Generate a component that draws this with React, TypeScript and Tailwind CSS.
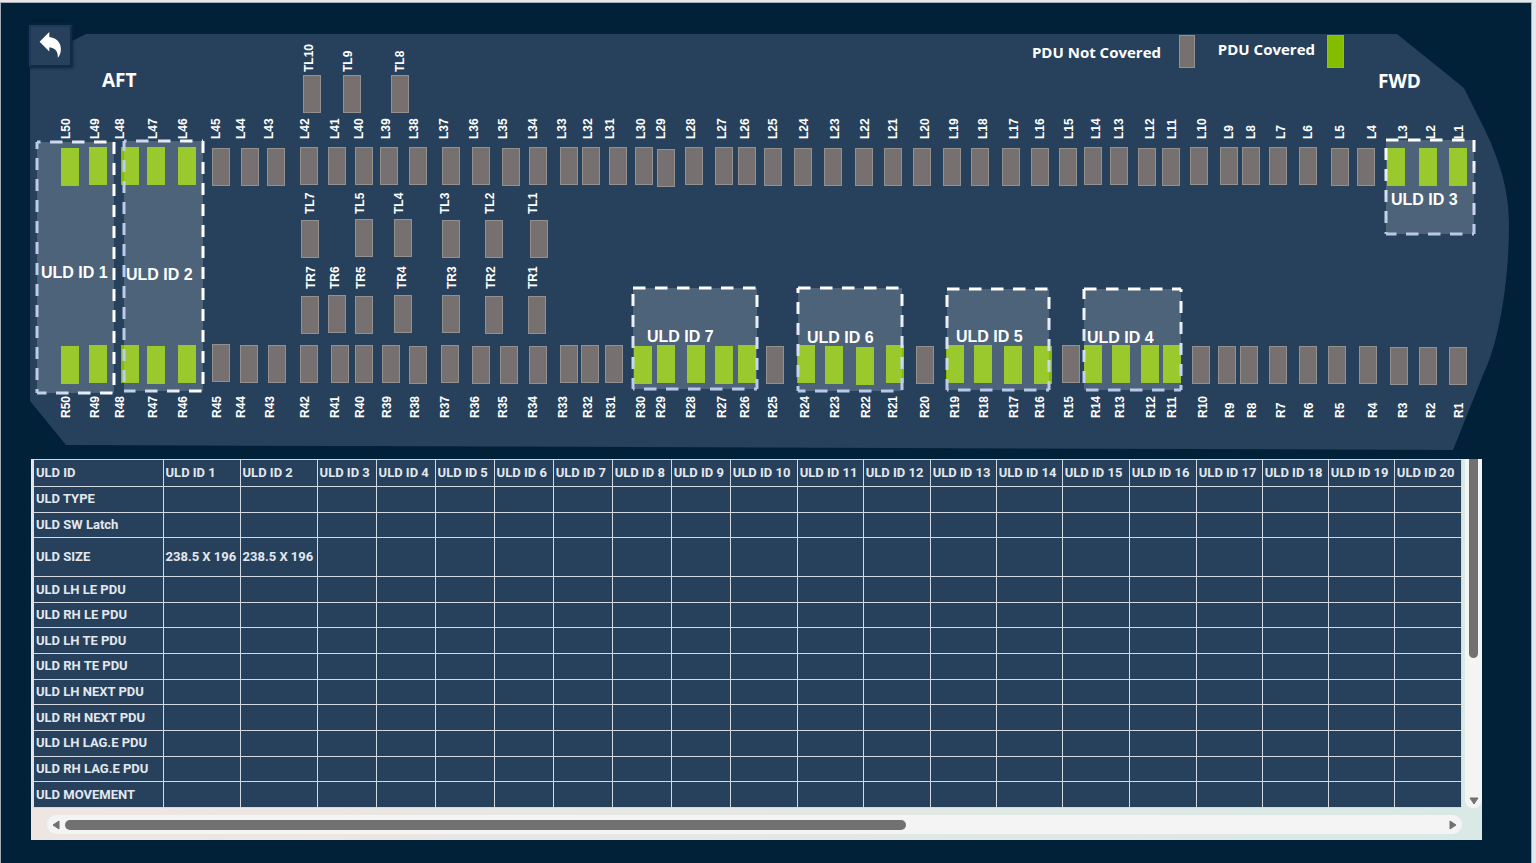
import React from "react";

type Pdu = [name: string, x: number, y: number, labelX: number, covered?: boolean];
type Row = { labelBottom: number; pdus: Pdu[] };

const PLAN_WIDTH = 1480;
const PLAN_LEFT = 30;
const PLAN_TOP = 34;

const pct = (x: number) => `${((x - PLAN_LEFT) / PLAN_WIDTH) * 100}%`;
const top = (y: number) => y - PLAN_TOP;

const rows: Row[] = [
  {
    labelBottom: 72,
    pdus: [
      ["TL10", 303, 75, 309],
      ["TL9", 343, 75, 348],
      ["TL8", 391, 75, 400],
    ],
  },
  {
    labelBottom: 139,
    pdus: [
      ["L50", 61, 148, 66, true], ["L49", 89, 147, 95, true], ["L48", 121, 147, 120, true],
      ["L47", 147, 147, 153, true], ["L46", 178, 147, 183, true], ["L45", 212, 148, 216],
      ["L44", 241, 148, 241], ["L43", 267, 148, 269], ["L42", 300, 147, 305],
      ["L41", 328, 147, 335], ["L40", 355, 147, 359], ["L39", 380, 147, 386],
      ["L38", 409, 147, 414], ["L37", 442, 147, 444], ["L36", 472, 147, 474],
      ["L35", 502, 148, 503], ["L34", 529, 147, 533], ["L33", 560, 147, 562],
      ["L32", 582, 147, 588], ["L31", 609, 147, 610], ["L30", 635, 147, 641],
      ["L29", 657, 149, 661], ["L28", 685, 147, 691], ["L27", 715, 147, 722],
      ["L26", 738, 147, 745], ["L25", 764, 148, 773], ["L24", 794, 148, 804],
      ["L23", 824, 148, 835], ["L22", 855, 148, 865], ["L21", 884, 148, 893],
      ["L20", 913, 148, 925], ["L19", 943, 148, 954], ["L18", 971, 148, 983],
      ["L17", 1002, 148, 1014], ["L16", 1031, 148, 1040], ["L15", 1059, 148, 1069],
      ["L14", 1084, 147, 1096], ["L13", 1110, 147, 1119], ["L12", 1138, 148, 1150],
      ["L11", 1162, 148, 1172], ["L10", 1190, 147, 1202], ["L9", 1220, 147, 1229],
      ["L8", 1242, 147, 1251], ["L7", 1269, 147, 1281], ["L6", 1299, 147, 1308],
      ["L5", 1331, 148, 1340], ["L4", 1357, 148, 1372], ["L3", 1387, 148, 1403, true],
      ["L2", 1419, 148, 1431, true], ["L1", 1449, 148, 1459, true],
    ],
  },
  {
    labelBottom: 214,
    pdus: [
      ["TL7", 301, 220, 310], ["TL5", 355, 219, 360], ["TL4", 394, 219, 399],
      ["TL3", 442, 220, 445], ["TL2", 485, 220, 490], ["TL1", 530, 220, 533],
    ],
  },
  {
    labelBottom: 289,
    pdus: [
      ["TR7", 301, 296, 311], ["TR6", 328, 295, 335], ["TR5", 355, 296, 361],
      ["TR4", 394, 295, 402], ["TR3", 442, 295, 452], ["TR2", 485, 296, 491],
      ["TR1", 528, 296, 533],
    ],
  },
  {
    labelBottom: 418,
    pdus: [
      ["R50", 61, 346, 66, true], ["R49", 89, 345, 95, true], ["R48", 121, 345, 120, true],
      ["R47", 147, 346, 153, true], ["R46", 178, 345, 183, true], ["R45", 212, 344, 217],
      ["R44", 240, 345, 241], ["R43", 268, 345, 270], ["R42", 300, 345, 305],
      ["R41", 331, 345, 335], ["R40", 355, 345, 360], ["R39", 382, 345, 387],
      ["R38", 409, 346, 415], ["R37", 441, 345, 445], ["R36", 472, 346, 475],
      ["R35", 500, 346, 503], ["R34", 529, 346, 533], ["R33", 560, 345, 563],
      ["R32", 581, 345, 588], ["R31", 605, 345, 611], ["R30", 634, 346, 641, true],
      ["R29", 657, 345, 661, true], ["R28", 687, 345, 691, true], ["R27", 715, 346, 722, true],
      ["R26", 738, 345, 745, true], ["R25", 766, 346, 773], ["R24", 797, 345, 805, true],
      ["R23", 825, 346, 835, true], ["R22", 856, 347, 866, true], ["R21", 886, 345, 893, true],
      ["R20", 916, 346, 925], ["R19", 946, 345, 955, true], ["R18", 974, 345, 984, true],
      ["R17", 1004, 346, 1014, true], ["R16", 1034, 346, 1040, true], ["R15", 1062, 345, 1069],
      ["R14", 1084, 345, 1096, true], ["R13", 1112, 345, 1120, true], ["R12", 1141, 345, 1151, true],
      ["R11", 1163, 345, 1172, true], ["R10", 1192, 346, 1203], ["R9", 1218, 346, 1230],
      ["R8", 1240, 346, 1252], ["R7", 1269, 346, 1281], ["R6", 1299, 346, 1309],
      ["R5", 1328, 346, 1340], ["R4", 1359, 346, 1373], ["R3", 1390, 347, 1403],
      ["R2", 1419, 347, 1431], ["R1", 1449, 347, 1459],
    ],
  },
];

type Uld = {
  name: string;
  x1: number;
  y1: number;
  x2: number;
  y2: number;
  labelX: number;
  labelY: number;
  fade: "left" | "bottom";
  /** Where a dash begins on the top, right, bottom and left edge. */
  dash: [number, number, number, number];
};

const ulds: Uld[] = [
  { name: "ULD ID 1", x1: 37, y1: 142, x2: 114, y2: 393, labelX: 41, labelY: 273, fade: "left", dash: [50, 142, 34, 137] },
  { name: "ULD ID 2", x1: 124, y1: 141, x2: 203, y2: 391, labelX: 126, labelY: 275, fade: "left", dash: [136, 141, 123, 139] },
  { name: "ULD ID 3", x1: 1386, y1: 140, x2: 1474, y2: 234, labelX: 1391, labelY: 200, fade: "bottom", dash: [1386, 140, 1384, 148] },
  { name: "ULD ID 4", x1: 1084, y1: 289, x2: 1181, y2: 390, labelX: 1087, labelY: 338, fade: "bottom", dash: [1084, 280, 1086, 287] },
  { name: "ULD ID 5", x1: 947, y1: 289, x2: 1049, y2: 390, labelX: 956, labelY: 337, fade: "bottom", dash: [947, 297, 958, 295] },
  { name: "ULD ID 6", x1: 798, y1: 288, x2: 902, y2: 391, labelX: 807, labelY: 338, fade: "bottom", dash: [798, 294, 793, 281] },
  { name: "ULD ID 7", x1: 633, y1: 288, x2: 757, y2: 389, labelX: 647, labelY: 337, fade: "bottom", dash: [633, 295, 644, 294] },
];

const columns = [130, 77, 77, 59, 59, 59, 59, 59, 59, 59, 67, 66, 67, 66, 66, 67, 67, 66, 66, 66, 67];
const columnTotal = columns.reduce((sum, w) => sum + w, 0);
const uldNumbers = Array.from({ length: 20 }, (_, i) => i + 1);

const tableRows: { name: string; values?: string[] }[] = [
  { name: "ULD TYPE" },
  { name: "ULD SW Latch" },
  { name: "ULD SIZE", values: ["238.5 X 196", "238.5 X 196"] },
  { name: "ULD LH LE PDU" },
  { name: "ULD RH LE PDU" },
  { name: "ULD LH TE PDU" },
  { name: "ULD RH TE PDU" },
  { name: "ULD LH NEXT PDU" },
  { name: "ULD RH NEXT PDU" },
  { name: "ULD LH LAG.E PDU" },
  { name: "ULD RH LAG.E PDU" },
  { name: "ULD MOVEMENT" },
];

function Hull() {
  return (
    <svg className="absolute inset-0 h-full w-full" viewBox="30 34 1480 416" preserveAspectRatio="none" aria-hidden="true">
      <path
        d="M30 62L86 34H1397L1464 88L1485 130C1500 162 1509 190 1509 225C1509 285 1498 345 1483 375L1453 450L66 445L30 401Z"
        fill="#27415c"
      />
    </svg>
  );
}

function PduMark({ pdu, labelBottom }: { pdu: Pdu; labelBottom: number }) {
  const [name, x, y, labelX, covered] = pdu;
  return (
    <>
      <span
        className={
          covered
            ? "absolute h-[38px] w-[18px] bg-[#84bd00]"
            : "absolute h-[38px] w-[18px] border border-[#94908d] bg-[#767170]"
        }
        style={{ left: pct(x), top: top(y) }}
      />
      <span
        className="absolute h-8 w-4 -translate-x-1/2 rotate-180 whitespace-nowrap text-xs leading-4 font-bold [writing-mode:vertical-rl]"
        style={{ left: pct(labelX), top: top(labelBottom) - 32 }}
      >
        {name}
      </span>
    </>
  );
}

function UldBox({ uld }: { uld: Uld }) {
  const id = uld.name.replace(/ /g, "-");
  const stroke = `url(#${id})`;
  const [t, r, b, l] = uld.dash;
  const horizontal = uld.fade === "left";
  return (
    <>
      <div
        className="absolute bg-white/18"
        style={{
          left: pct(uld.x1),
          top: top(uld.y1),
          width: `${((uld.x2 - uld.x1) / PLAN_WIDTH) * 100}%`,
          height: uld.y2 - uld.y1,
        }}
      >
        <svg className="absolute inset-0 h-full w-full overflow-visible" aria-hidden="true">
          <defs>
            <linearGradient
              id={id}
              gradientUnits="userSpaceOnUse"
              x1="0"
              y1="0"
              x2={horizontal ? "100%" : "0"}
              y2={horizontal ? "0" : "100%"}
            >
              <stop offset="0" stopColor={horizontal ? "#bccbeb" : "#ffffff"} />
              <stop offset="1" stopColor={horizontal ? "#ffffff" : "#b8c8ea"} />
            </linearGradient>
          </defs>
          <g stroke={stroke} strokeWidth="3" fill="none">
            <line x1="0" y1="0" x2="100%" y2="0" strokeDasharray="12.5 9.5" strokeDashoffset={uld.x1 - t} />
            <line x1="100%" y1="0" x2="100%" y2="100%" strokeDasharray="12 9" strokeDashoffset={uld.y1 - r} />
            <line x1="0" y1="100%" x2="100%" y2="100%" strokeDasharray="12.5 9.5" strokeDashoffset={uld.x1 - b} />
            <line x1="0" y1="0" x2="0" y2="100%" strokeDasharray="12 9" strokeDashoffset={uld.y1 - l} />
          </g>
        </svg>
      </div>
      <span
        className="absolute text-base leading-5 font-bold whitespace-nowrap"
        style={{ left: pct(uld.labelX), top: top(uld.labelY) - 10 }}
      >
        {uld.name}
      </span>
    </>
  );
}

function BackButton() {
  return (
    <button
      type="button"
      aria-label="Back"
      className="absolute -top-[9px] -left-px flex h-[42px] w-[43px] items-center justify-center border-2 border-t-[#1b3a58] border-r-[#122a48] border-b-[#122a48] border-l-[#1b3a58] bg-[#27415c] shadow-[0_0_3px_1px_#0e2340]"
    >
      <svg className="h-7 w-6" viewBox="39 32 24 28" aria-hidden="true">
        <path
          d="M39.6 41.7L49.3 32V37C56 37.6 61 42 60.9 49.5C60.8 53 59.6 56 57.8 57.8C58.2 52.5 56 48.2 49.3 47.3V51.6Z"
          fill="#ffffff"
        />
      </svg>
    </button>
  );
}

function CargoPlan() {
  return (
    <section aria-label="Cargo deck" className="relative h-[416px]">
      <Hull />
      <BackButton />
      <h2 className="absolute font-['Open_Sans','Noto_Sans',sans-serif] text-[19px] leading-6 font-bold" style={{ left: pct(102), top: top(68) }}>
        AFT
      </h2>
      <h2 className="absolute font-['Open_Sans','Noto_Sans',sans-serif] text-[19px] leading-6 font-bold" style={{ left: pct(1378), top: top(69) }}>
        FWD
      </h2>
      <div
        className="absolute flex items-center gap-[18px] font-['Open_Sans','Noto_Sans',sans-serif] text-[15px] leading-7 font-bold whitespace-nowrap"
        style={{ right: `${((1510 - 1195) / PLAN_WIDTH) * 100}%`, top: top(35) }}
      >
        PDU Not Covered
        <span className="h-[33px] w-4 border border-[#94908d] bg-[#767170]" />
      </div>
      <div
        className="absolute flex items-start gap-3 font-['Open_Sans','Noto_Sans',sans-serif] text-[15px] leading-7 font-bold whitespace-nowrap"
        style={{ right: `${((1510 - 1344) / PLAN_WIDTH) * 100}%`, top: top(35) }}
      >
        PDU Covered
        <span className="h-[33px] w-[17px] border border-[#9aa58a] bg-[#84bd00]" />
      </div>
      {rows.map((row) =>
        row.pdus.map((pdu) => <PduMark key={pdu[0]} pdu={pdu} labelBottom={row.labelBottom} />),
      )}
      {ulds.map((uld) => (
        <UldBox key={uld.name} uld={uld} />
      ))}
    </section>
  );
}

function UldTable() {
  return (
    <table className="h-[349px] w-full table-fixed border-collapse border-l-2 border-[#dfe3e8] bg-[#27415c] text-left font-[Roboto,sans-serif] text-[13px] leading-4 text-[#e3e8ee]">
      <colgroup>
        {columns.map((w, i) => (
          <col key={i} style={{ width: `${(w / columnTotal) * 100}%` }} />
        ))}
      </colgroup>
      <thead>
        <tr className="h-[27px]">
          <th scope="col" className="border border-[#d3d9e0] px-0.5 py-0 font-bold whitespace-nowrap">
            ULD ID
          </th>
          {uldNumbers.map((n) => (
            <th key={n} scope="col" className="border border-[#d3d9e0] px-0.5 py-0 font-bold whitespace-nowrap">
              ULD ID {n}
            </th>
          ))}
        </tr>
      </thead>
      <tbody>
        {tableRows.map((row) => (
          <tr key={row.name} className={row.values ? "h-[38px]" : "h-[25px]"}>
            <th scope="row" className="border border-[#d3d9e0] px-0.5 py-0 font-bold whitespace-nowrap">
              {row.name}
            </th>
            {uldNumbers.map((n) => (
              <td key={n} className="border border-[#d3d9e0] px-0.5 py-0 font-bold whitespace-nowrap">
                {row.values?.[n - 1]}
              </td>
            ))}
          </tr>
        ))}
      </tbody>
    </table>
  );
}

function Arrow({ d }: { d: string }) {
  return (
    <svg className="h-2.5 w-2.5" viewBox="0 0 10 10" aria-hidden="true">
      <path d={d} fill="#717171" stroke="#717171" strokeWidth="1" strokeLinejoin="round" />
    </svg>
  );
}

function TablePanel() {
  return (
    <section aria-label="ULD data" className="mt-[9px] mr-7 ml-px bg-linear-to-r from-[#efe6e2] to-[#d9e9e5]">
      <div className="flex pl-px">
        <div className="min-w-0 flex-1">
          <UldTable />
        </div>
        <div className="ml-[3px] flex w-[17px] flex-col items-center justify-between rounded-b-lg bg-[#f4f4f4] pb-0.5">
          <div className="h-[199px] w-[9px] rounded-b-full bg-[#717171]" />
          <button type="button" aria-label="Scroll down">
            <Arrow d="M1 2H9L5 8Z" />
          </button>
        </div>
      </div>
      <div className="flex pt-[7px] pr-5 pb-1.5 pl-4">
        <div className="flex h-[19px] flex-1 items-center gap-1 rounded-full bg-[#f4f4f4] px-1">
          <button type="button" aria-label="Scroll left">
            <Arrow d="M8 1V9L2 5Z" />
          </button>
          <div className="flex-1">
            <div className="h-[10px] w-[61%] rounded-full bg-[#717171]" />
          </div>
          <button type="button" aria-label="Scroll right">
            <Arrow d="M2 1V9L8 5Z" />
          </button>
        </div>
      </div>
    </section>
  );
}

export default function App() {
  return (
    <div className="flex min-h-screen flex-col bg-linear-to-r from-[#ebe6e9] to-[#dfe8ec] pt-0.5 pr-1">
      <main className="flex-1 border-x border-t border-[#a4adb5] bg-[#002137] pt-[31px] pr-[21px] pl-[29px] font-['Liberation_Sans',Arial,sans-serif] text-white">
        <CargoPlan />
        <TablePanel />
      </main>
    </div>
  );
}
